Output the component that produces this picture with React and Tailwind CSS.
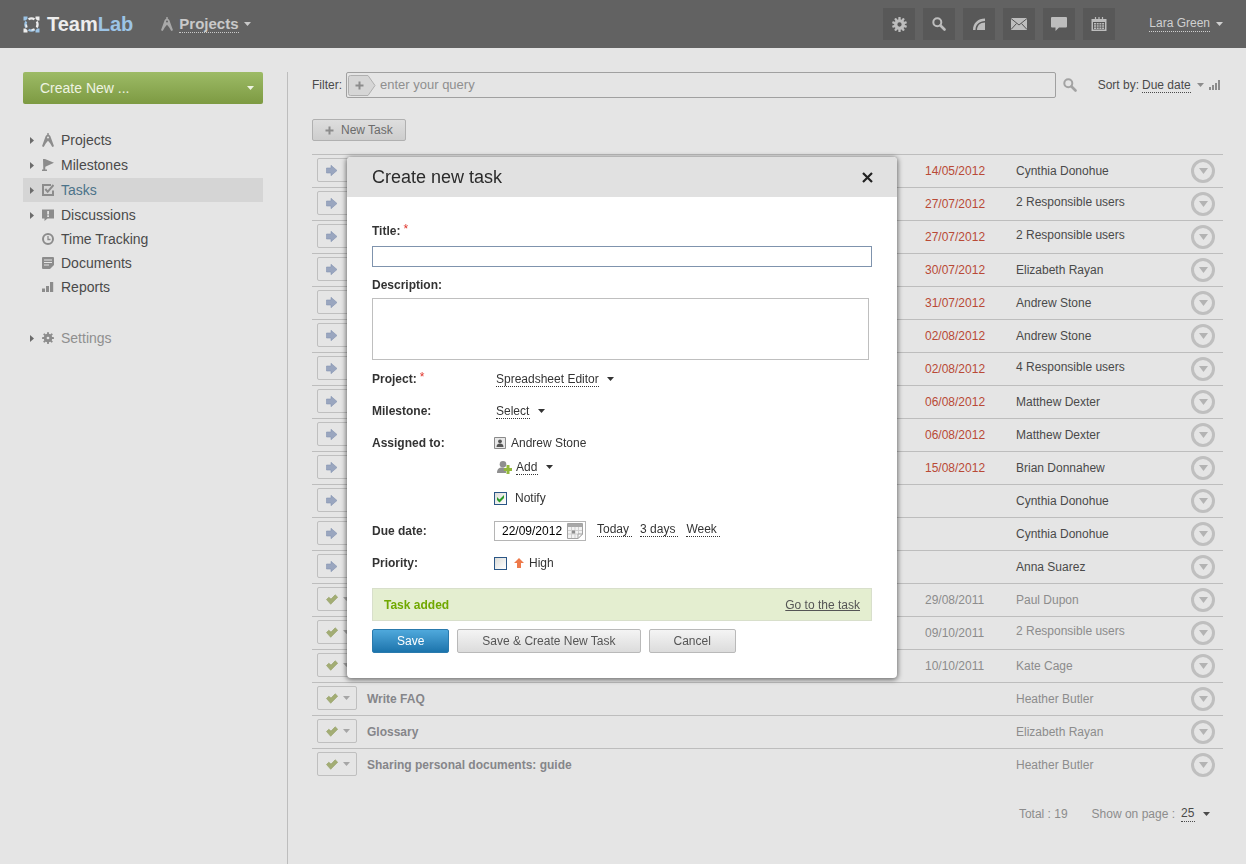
import React from "react";

const Caret = ({ className = "" }) => (
  <svg className={`h-1 w-[7px] shrink-0 ${className}`} viewBox="0 0 7 4" fill="currentColor" aria-hidden="true">
    <path d="M0 0h7L3.5 4z" />
  </svg>
);

const Gear = ({ teeth = 8, className = "", fill = "currentColor", hole = 2.2 }) => (
  <svg className={className} viewBox="0 0 14 14" aria-hidden="true">
    {Array.from({ length: teeth }, (_, i) => (
      <rect key={i} x="5.9" y="0" width="2.2" height="4" rx="0.5" fill={fill} transform={`rotate(${(360 / teeth) * i} 7 7)`} />
    ))}
    <circle cx="7" cy="7" r={(5 + hole) / 2} fill="none" stroke={fill} strokeWidth={5 - hole} />
  </svg>
);

const Compass = ({ className = "" }) => (
  <svg className={className} viewBox="0 0 12 14" fill="currentColor" aria-hidden="true">
    <path
      fillRule="evenodd"
      d="M5.3 0h1.4v1.4L8.300 3 12 13.200 10.300 14 8.100 10.200 6 7.800 3.900 10.200 1.700 14 0 13.200 3.700 3l1.600-1.600zM6 3.400a1 1 0 1 0 0 2 1 1 0 0 0 0-2z"
    />
  </svg>
);

const Search = ({ className = "" }) => (
  <svg className={className} viewBox="0 0 14 14" fill="none" stroke="currentColor" aria-hidden="true">
    <circle cx="5.300" cy="5.300" r="4" strokeWidth="2" />
    <path d="M8.500 8.500l4 4" strokeWidth="2.600" strokeLinecap="round" />
  </svg>
);

const Plus = ({ className = "" }) => (
  <svg className={className} viewBox="0 0 9 9" fill="currentColor" aria-hidden="true">
    <path d="M3.500 0.500h2v3h3v2h-3v3h-2v-3h-3v-2h3z" />
  </svg>
);

const Logo = () => (
  <svg className="h-[17px] w-[17px]" viewBox="0 0 17 17" fill="none" aria-hidden="true">
    <path d="M5.500 3.200C7.300 2.200 9.700 2.200 11.500 3.200M13.800 5.500c1 1.800 1 4.200 0 6" stroke="#ededed" strokeWidth="2.200" />
    <path d="M11.500 13.800c-1.800 1-4.200 1-6 0M3.200 11.500c-1-1.800-1-4.200 0-6" stroke="#9cc4e6" strokeWidth="2.200" />
    <path d="M3.200 8.500c0 1.200.2 2 .6 3M8.500 13.800c1.200 0 2-.2 3-.6" stroke="#ededed" strokeWidth="1.800" />
    <path d="M.5.500h4v2.200L2.700 4.500H.5z" fill="#9cc4e6" />
    <path d="M16.500.500h-4v2.200l1.800 1.800h2.200z" fill="#ededed" />
    <path d="M.5 16.500h4v-2.200l-1.800-1.800H.5z" fill="#ededed" />
    <path d="M16.500 16.500h-4v-2.200l1.800-1.800h2.200z" fill="#9cc4e6" />
  </svg>
);

const topIcons = [
  { label: "Settings", icon: <Gear teeth={10} hole={2} className="h-[15px] w-[15px]" /> },
  { label: "Search", icon: <Search className="h-[14px] w-[14px]" /> },
  {
    label: "Feed",
    icon: (
      <svg className="h-3 w-3" viewBox="0 0 12 12" aria-hidden="true">
        <path d="M0 12C0 5 5 .5 12 .5v2.500C6.500 3 2.500 6.500 2.500 12z" fill="currentColor" />
        <path d="M4 12c0-4.500 3-7.500 8-7.500V12z" fill="currentColor" />
      </svg>
    ),
  },
  {
    label: "Mail",
    icon: (
      <svg className="h-3 w-4" viewBox="0 0 16 12" aria-hidden="true">
        <path d="M0 0h16v12H0z" fill="currentColor" />
        <path d="M0 .5l8 6.500 8-6.500M0 11.500l5.500-6M16 11.500l-5.500-6" fill="none" stroke="#555" />
      </svg>
    ),
  },
  {
    label: "Talk",
    icon: (
      <svg className="h-[14px] w-4" viewBox="0 0 16 14" fill="currentColor" aria-hidden="true">
        <path d="M1 0h14a1 1 0 0 1 1 1v8.500a1 1 0 0 1-1 1H8l-3.500 3.500v-3.500H1a1 1 0 0 1-1-1V1a1 1 0 0 1 1-1z" />
      </svg>
    ),
  },
  {
    label: "Calendar",
    icon: (
      <svg className="h-[14px] w-4" viewBox="0 0 16 14" aria-hidden="true">
        <path d="M.5 2h15v12H.5z" fill="currentColor" />
        <path d="M4.500 0v3M8 0v3M11.500 0v3" stroke="currentColor" strokeWidth="1.200" />
        <path d="M2 5h12v7.500H2z" fill="#555" />
        <path d="M3 6h2v1.500H3zM5.700 6h2v1.500h-2zM8.400 6h2v1.500h-2zM11.100 6h2v1.500h-2zM3 8.200h2v1.500H3zM5.700 8.200h2v1.500h-2zM8.400 8.200h2v1.500h-2zM11.100 8.200h2v1.500h-2zM3 10.400h2v1.500H3zM5.700 10.400h2v1.500h-2zM8.400 10.400h2v1.500h-2zM11.100 10.400h2v1.500h-2z" fill="currentColor" />
      </svg>
    ),
  },
];

const navIcon = "h-3 w-3";

const nav = [
  { label: "Projects", expand: true, icon: <Compass className="h-[14px] w-3" /> },
  {
    label: "Milestones",
    expand: true,
    icon: (
      <svg className={navIcon} viewBox="0 0 12 12" fill="currentColor" aria-hidden="true">
        <path d="M1 0h2l9 3.700L3.300 7.800V10.500H5V12H0v-1.500h1.300z" />
      </svg>
    ),
  },
  {
    label: "Tasks",
    expand: true,
    active: true,
    icon: (
      <svg className={navIcon} viewBox="0 0 12 12" fill="none" stroke="currentColor" aria-hidden="true">
        <path d="M9 1H1v10h10V6.500" strokeWidth="2" />
        <path d="M3.300 5l2.400 2.800L11.500 1" strokeWidth="2" />
      </svg>
    ),
  },
  {
    label: "Discussions",
    expand: true,
    icon: (
      <svg className={navIcon} viewBox="0 0 12 12" fill="currentColor" aria-hidden="true">
        <path d="M0 .5h12v9H5.500L2.500 12V9.500H0z" />
        <path d="M5.200 2h1.800v3.500H5.200zM5.200 6.300h1.800V8H5.200z" fill="#e5e5e5" />
      </svg>
    ),
  },
  {
    label: "Time Tracking",
    icon: (
      <svg className={navIcon} viewBox="0 0 12 12" fill="none" stroke="currentColor" aria-hidden="true">
        <circle cx="6" cy="6" r="5" strokeWidth="2" />
        <path d="M6 3v3.500h2.500" strokeWidth="1.300" />
      </svg>
    ),
  },
  {
    label: "Documents",
    icon: (
      <svg className={navIcon} viewBox="0 0 12 12" fill="currentColor" aria-hidden="true">
        <path d="M1 0h10a1 1 0 0 1 1 1v7l-4 4H1a1 1 0 0 1-1-1V1a1 1 0 0 1 1-1z" />
        <path d="M2 3h8M2 5.500h8M2 8h5" stroke="#e5e5e5" />
      </svg>
    ),
  },
  {
    label: "Reports",
    icon: (
      <svg className={navIcon} viewBox="0 0 12 12" fill="currentColor" aria-hidden="true">
        <path d="M0 7.500h3V11H0zM4 5h3v6H4zM8 1h3.200v10H8z" />
      </svg>
    ),
  },
];

const NavItem = ({ label, icon, expand, active, muted, spaced }) => (
  <li className={spaced ? "mb-px" : ""}>
    <a
      href="#"
      className={`flex h-6 items-center text-sm leading-6 ${active ? "bg-[#d5d5d5] text-[#4c7389]" : muted ? "text-[#8f8f8f]" : "text-[#4a4a4a]"}`}
    >
      <span className="flex w-[19px] pl-[7px] text-[#6b6b6b]">
        {expand && (
          <svg className="h-[7px] w-1" viewBox="0 0 4 7" fill="currentColor" aria-hidden="true">
            <path d="M0 0v7l4-3.500z" />
          </svg>
        )}
      </span>
      <span className="flex w-[19px] text-[#8c8c8c]">{icon}</span>
      {label}
    </a>
  </li>
);

const tasks = [
  { due: "14/05/2012", who: "Cynthia Donohue" },
  { due: "27/07/2012", who: "2 Responsible users", many: true },
  { due: "27/07/2012", who: "2 Responsible users", many: true },
  { due: "30/07/2012", who: "Elizabeth Rayan" },
  { due: "31/07/2012", who: "Andrew Stone" },
  { due: "02/08/2012", who: "Andrew Stone" },
  { due: "02/08/2012", who: "4 Responsible users", many: true },
  { due: "06/08/2012", who: "Matthew Dexter" },
  { due: "06/08/2012", who: "Matthew Dexter" },
  { due: "15/08/2012", who: "Brian Donnahew" },
  { who: "Cynthia Donohue" },
  { who: "Cynthia Donohue" },
  { who: "Anna Suarez" },
  { due: "29/08/2011", who: "Paul Dupon", done: true },
  { due: "09/10/2011", who: "2 Responsible users", done: true, many: true },
  { due: "10/10/2011", who: "Kate Cage", done: true },
  { title: "Write FAQ", who: "Heather Butler", done: true },
  { title: "Glossary", who: "Elizabeth Rayan", done: true },
  { title: "Sharing personal documents: guide", who: "Heather Butler", done: true },
];

const TaskRow = ({ title, due, who, done, many }) => (
  <tr className="h-[33px] border-t border-[#bdbdbd]">
    <td className="pb-[2px] pl-[5px]">
      <button type="button" aria-label="Task status" className="flex h-6 w-10 items-center justify-between rounded-xs border border-[#bfbfbf] pr-[6px] pl-2">
        {done ? (
          <svg className="h-[11px] w-3" viewBox="0 0 12 11" aria-hidden="true">
            <path d="M.5 5.500L2.800 3.200l2.200 1.900L9.200.8 11.700 3.200 4.700 10.300z" fill="#a3ad74" stroke="#93a066" strokeWidth=".6" />
          </svg>
        ) : (
          <svg className="h-[11px] w-3" viewBox="0 0 12 11" aria-hidden="true">
            <path d="M.5 3H5V.3l6 5.200L5 10.700V8H.5z" fill="#9aa6bf" stroke="#8493b2" strokeWidth=".6" />
          </svg>
        )}
        {done && <Caret className="text-[#a6a6a6]" />}
      </button>
    </td>
    <td className="font-bold text-[#85868a]">{title}</td>
    <td className={done ? "text-[#8c8c8c]" : "text-[#b94a36]"}>{due}</td>
    <td className={`${done ? "text-[#8c8c8c]" : "text-[#4a4a4a]"} ${many ? "pb-[5px]" : ""}`}>{who}</td>
    <td>
      <button type="button" aria-label="Task actions" className="flex h-6 w-6 items-center justify-center rounded-full border-3 border-[#bfbfbf] text-[#b3b3b3]">
        <svg className="h-[6px] w-[9px]" viewBox="0 0 9 6" fill="currentColor" aria-hidden="true">
          <path d="M0 0h9L4.500 6z" />
        </svg>
      </button>
    </td>
  </tr>
);

const InlineSelect = ({ id, value, gap = "gap-2", caret = "" }) => (
  <span className={`flex items-center ${gap}`}>
    <select id={id} className="h-4 appearance-none border-b border-dotted border-current bg-transparent p-0 leading-[14px]">
      <option>{value}</option>
    </select>
    <Caret className={caret} />
  </span>
);

const Required = () => <span className="ml-[3px] self-start font-normal leading-3 text-[#e0352b]">*</span>;

const FormLabel = ({ htmlFor, required, children }) => (
  <label htmlFor={htmlFor} className="flex w-[122px] shrink-0 items-center leading-4 font-bold">
    {children}
    {required && <Required />}
  </label>
);

const Check = ({ id, checked }) => (
  <span className="grid h-[13px] w-[13px] shrink-0">
    <input
      id={id}
      type="checkbox"
      defaultChecked={checked}
      className="peer col-start-1 row-start-1 h-[13px] w-[13px] appearance-none border border-[#2a5686] bg-linear-to-br from-[#dcdcd8] to-white"
    />
    <svg className="pointer-events-none col-start-1 row-start-1 hidden h-[13px] w-[13px] peer-checked:block" viewBox="0 0 13 13" aria-hidden="true">
      <path d="M3 5v3l2.500 2.500L10 6V3L5.500 7.500z" fill="#2a9a2a" />
    </svg>
  </span>
);

const greyButton = "h-6 rounded-xs border border-[#b9b9b9] bg-linear-to-b from-[#f4f4f4] to-[#dcdcdc] px-6 text-[#555]";

const TaskDialog = () => (
  <div className="fixed inset-0 flex items-start justify-center pt-[157px] pr-[2px]">
    <form
      role="dialog"
      aria-labelledby="dialog-title"
      onSubmit={(e) => e.preventDefault()}
      className="w-[550px] rounded-sm bg-white text-xs text-[#333] shadow-[0_1px_5px_1px_rgba(0,0,0,0.5)]"
    >
      <header className="flex h-10 items-center justify-between rounded-t-sm bg-[#e1e1e1] pr-6 pl-[25px]">
        <h2 id="dialog-title" className="text-lg text-[#2b2b2b]">Create new task</h2>
        <button type="button" aria-label="Close" className="text-[#222]">
          <svg className="h-[11px] w-[11px]" viewBox="0 0 11 11" fill="none" stroke="currentColor" strokeWidth="2.200" aria-hidden="true">
            <path d="M1 1l9 9M10 1l-9 9" />
          </svg>
        </button>
      </header>

      <div className="pt-[26px] pr-[25px] pb-[25px] pl-[25px]">
        <FormLabel htmlFor="title" required>Title:</FormLabel>
        <input id="title" type="text" className="mt-[7px] block h-[21px] w-full border border-[#7f93ad] bg-white px-1 outline-none" />
        <div className="mt-[10px]">
          <FormLabel htmlFor="description">Description:</FormLabel>
        </div>
        <textarea id="description" className="mt-[5px] block h-[62px] w-[497px] resize-none border border-[#bfbfbf] bg-white p-1 outline-none" />

        <div className="mt-[3px] flex h-8 items-center">
          <FormLabel htmlFor="project" required>Project:</FormLabel>
          <div className="pl-[2px]"><InlineSelect id="project" value="Spreadsheet Editor" /></div>
        </div>
        <div className="flex h-8 items-center">
          <FormLabel htmlFor="milestone">Milestone:</FormLabel>
          <div className="pl-[2px]"><InlineSelect id="milestone" value="Select" /></div>
        </div>
        <div className="flex h-[88px]">
          <div className="flex h-8 items-center">
            <FormLabel htmlFor="assign">Assigned to:</FormLabel>
          </div>
          <div>
            <div className="flex h-8 items-center gap-[5px]">
              <svg className="h-3 w-3" viewBox="0 0 12 12" aria-hidden="true">
                <path d="M.5.500h11v11H.5z" fill="#e8e8e8" stroke="#8a8a8a" />
                <circle cx="6" cy="4.300" r="1.900" fill="#555" />
                <path d="M2.500 10c0-2.500 1.500-3.500 3.500-3.500S9.500 7.500 9.500 10z" fill="#555" />
              </svg>
              Andrew Stone
            </div>
            <div className="flex h-4 items-center gap-1 pl-[3px]">
              <svg className="h-[13px] w-[15px]" viewBox="0 0 15 13" aria-hidden="true">
                <circle cx="6" cy="3.300" r="3.300" fill="#8f8f8f" />
                <path d="M0 12c0-4 2-5.500 5-5.500S9 8 9 12z" fill="#8f8f8f" />
                <path d="M9.500 4h3v3H15v3h-2.500v3h-3v-3H7V7h2.500z" fill="#93b83c" />
              </svg>
              <InlineSelect id="assign" value="Add" />
            </div>
            <div className="mt-[7px] flex h-8 items-center gap-2">
              <Check id="notify" checked />
              <label htmlFor="notify">Notify</label>
            </div>
          </div>
        </div>
        <div className="flex h-8 items-center">
          <FormLabel htmlFor="due">Due date:</FormLabel>
          <div className="flex h-5 w-[92px] items-center justify-between border border-[#b5b5b5] pr-[2px] pl-[7px] text-black">
            <input id="due" type="text" defaultValue="22/09/2012" className="w-16 min-w-0 bg-transparent outline-none" />
            <button type="button" aria-label="Open calendar">
              <svg className="h-4 w-4" viewBox="0 0 16 16" aria-hidden="true">
                <path d="M.5.500h15V11L11 15.500H.5z" fill="#f2f2f2" stroke="#a3a3a3" />
                <path d="M1 1h14v3H1z" fill="#a8a8a8" />
                <path d="M1 7.500h14M1 11h12M4.500 4v11M8 4v11M11.500 4v9" stroke="#cfcfcf" />
                <path d="M5 7.500h3v3H5z" fill="#8e8e8e" />
                <path d="M15.500 11H11v4.500z" fill="#fff" stroke="#a3a3a3" />
              </svg>
            </button>
          </div>
          <div className="flex gap-2 pb-[3px] pl-[11px]">
            {["Today", "3 days", "Week"].map((t) => (
              <button key={t} type="button" className="border-b border-dotted border-[#333] pr-[3px] leading-[14px]">{t}</button>
            ))}
          </div>
        </div>
        <div className="flex h-8 items-center">
          <FormLabel htmlFor="priority">Priority:</FormLabel>
          <Check id="priority" />
          <svg className="ml-[7px] h-[10px] w-[10px]" viewBox="0 0 10 10" fill="#ee7a4b" aria-hidden="true">
            <path d="M5 0l5 5H7v5H3V5H0z" />
          </svg>
          <label htmlFor="priority" className="ml-[5px]">High</label>
        </div>

        <div className="mt-[9px] flex h-[33px] items-center justify-between border border-[#d8dfcb] bg-[#e4eed0] px-[11px]">
          <strong className="text-[#70a800]">Task added</strong>
          <a href="#" className="text-[#555] underline">Go to the task</a>
        </div>
        <div className="mt-2 flex gap-2">
          <button type="submit" className="h-6 rounded-xs border border-[#2a7aad] bg-linear-to-b from-[#4fa9dc] to-[#1b74ac] px-6 text-white">Save</button>
          <button type="button" className={greyButton}>Save &amp; Create New Task</button>
          <button type="button" className={greyButton}>Cancel</button>
        </div>
      </div>
    </form>
  </div>
);

export default function App() {
  return (
    <div className="flex min-h-screen flex-col bg-[#e5e5e5] font-['Liberation_Sans',Arial,sans-serif] text-xs text-[#4a4a4a]">
      <header className="flex h-12 items-center bg-[#626262] pr-[23px] pl-[23px] text-[#d0d0d0]">
        <a href="#" className="flex items-center gap-[7px] text-xl font-bold text-[#ededed]">
          <Logo />
          <span>Team<span className="text-[#9cc4e6]">Lab</span></span>
        </a>
        <button type="button" className="ml-7 flex items-center text-[15px] leading-4 font-bold text-[#c9c9c9]">
          <Compass className="h-[14px] w-3 text-[#a8a8a8]" />
          <span className="mr-[5px] ml-[6px] border-b border-dotted border-[#c9c9c9]">Projects</span>
          <Caret />
        </button>
        <div className="ml-auto flex gap-2 text-[#bdbdbd]">
          {topIcons.map((t) => (
            <button key={t.label} type="button" aria-label={t.label} className="flex h-8 w-8 items-center justify-center bg-[#585858]">
              {t.icon}
            </button>
          ))}
        </div>
        <button type="button" className="ml-[34px] flex items-center gap-[6px]">
          <span className="border-b border-dotted border-current leading-[15px]">Lara Green</span>
          <Caret />
        </button>
      </header>

      <div className="flex flex-1 pt-6 pr-[23px] pl-[23px]">
        <aside className="mr-6 w-60 shrink-0">
          <button type="button" className="flex h-8 w-full items-center justify-between rounded-xs bg-linear-to-b from-[#9dbb66] to-[#7d9a42] pr-[9px] pl-[17px] text-sm text-[#eef3e2]">
            Create New ...
            <Caret />
          </button>
          <nav className="mt-6">
            <ul>
              {nav.map((n) => (
                <NavItem key={n.label} {...n} spaced={n.expand && n.label !== "Discussions"} />
              ))}
            </ul>
            <ul className="mt-[27px]">
              <NavItem label="Settings" expand muted icon={<Gear className="h-3 w-3" hole={1.6} />} />
            </ul>
          </nav>
        </aside>

        <main className="min-w-0 flex-1 border-l border-[#bdbdbd] pl-6">
          <div className="flex items-center">
            <label htmlFor="filter" className="w-[34px]">Filter:</label>
            <div className="flex h-[26px] flex-1 items-center rounded-xs border border-[#a0a0a0] pl-px">
              <button type="button" aria-label="Add filter">
                <svg className="h-[21px] w-7" viewBox="0 0 28 21" aria-hidden="true">
                  <path d="M2.500.5h17.500l7 10-7 10H2.500a2 2 0 0 1-2-2v-16a2 2 0 0 1 2-2z" fill="#d6d6d6" stroke="#b0b0b0" />
                  <path d="M10.500 6.500h2v3h3v2h-3v3h-2v-3h-3v-2h3z" fill="#8c8c8c" />
                </svg>
              </button>
              <input id="filter" type="text" placeholder="enter your query" className="ml-1 min-w-0 flex-1 bg-transparent text-[13px] outline-none placeholder:text-[#8f8f8f]" />
            </div>
            <button type="button" aria-label="Search tasks" className="ml-[7px] text-[#a3a3a3]">
              <Search className="h-[14px] w-[14px]" />
            </button>
            <div className="ml-[21px] flex items-center pr-[2px]">
              <label htmlFor="sort" className="mr-[3px]">Sort by:</label>
              <InlineSelect id="sort" value="Due date" gap="gap-[6px]" caret="text-[#8c8c8c]" />
              <button type="button" aria-label="Sort direction" className="ml-[5px] text-[#8c8c8c]">
                <svg className="h-[10px] w-3" viewBox="0 0 12 10" fill="currentColor" aria-hidden="true">
                  <path d="M0 7h2v3H0zM3 5h2v5H3zM6 3h2v7H6zM9 0h2v10H9z" />
                </svg>
              </button>
            </div>
          </div>

          <button type="button" className="mt-[21px] flex h-[22px] items-center gap-[7px] rounded-xs border border-[#b0b0b0] bg-linear-to-b from-[#dedede] to-[#cdcdcd] px-3 text-[#6b6b6b]">
            <Plus className="h-[9px] w-[9px] text-[#8c8c8c]" />
            New Task
          </button>

          <table className="mt-[13px] w-full table-fixed border-collapse text-left">
            <colgroup>
              <col className="w-[55px]" />
              <col />
              <col className="w-[91px]" />
              <col className="w-[175px]" />
              <col className="w-8" />
            </colgroup>
            <tbody>
              {tasks.map((t, i) => (
                <TaskRow key={i} {...t} />
              ))}
            </tbody>
          </table>

          <footer className="mt-6 flex h-4 items-center justify-end gap-6 pr-[13px] text-[#8c8c8c]">
            <span>Total : 19</span>
            <span className="flex items-center gap-[6px]">
              <label htmlFor="per-page">Show on page :</label>
              <span className="text-[#4a4a4a]"><InlineSelect id="per-page" value="25" /></span>
            </span>
          </footer>
        </main>
      </div>

      <TaskDialog />
    </div>
  );
}
